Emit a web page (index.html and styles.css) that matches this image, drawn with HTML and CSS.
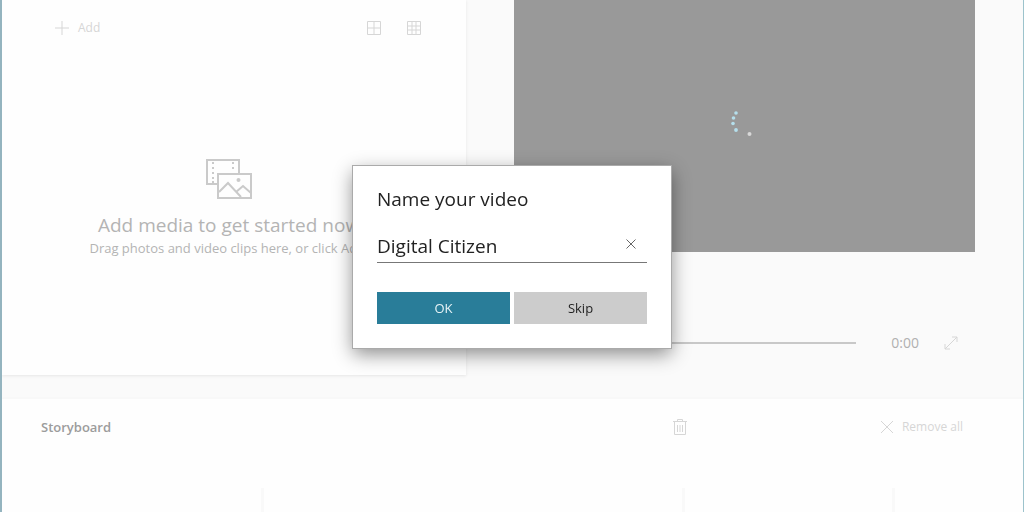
FILE: index.html
```html
<!DOCTYPE html>
<html lang="en">
<head>
<meta charset="utf-8">
<meta name="viewport" content="width=device-width, initial-scale=1">
<title>Video editor</title>
<link rel="stylesheet" href="styles.css">
</head>
<body>
<div class="window">
  <main class="workspace">
    <section class="library">
      <div class="toolbar">
        <button class="tool" type="button">
          <svg width="16" height="16" viewBox="0 0 16 16"><path d="M8 1v14M1 8h14"/></svg>
          Add
        </button>
        <div class="views">
          <button class="tool" type="button" aria-label="Large thumbnails">
            <svg width="16" height="16" viewBox="0 0 16 16"><path d="M1.500 1.500h13v13h-13zM8 1.500v13M1.500 8h13"/></svg>
          </button>
          <button class="tool" type="button" aria-label="Small thumbnails">
            <svg width="16" height="16" viewBox="0 0 16 16"><path d="M1.500 1.500h13v13h-13zM6 1.500v13M10 1.500v13M1.500 6h13M1.500 10h13"/></svg>
          </button>
        </div>
      </div>
      <div class="empty">
        <svg class="media" width="48" height="42" viewBox="0 0 48 42">
          <path d="M13 26H2V2h32v13"/>
          <path d="M8 4v2M8 9v2M8 14v2M8 19v2M8 23v3M28 4v2M28 9v2" />
          <path d="M13 16h33v24H13z"/>
          <path d="M14 34l9-9 13 14M31 34l7-6 8 7"/>
          <circle cx="33.500" cy="22" r="1"/>
        </svg>
        <h1 class="empty-title">Add media to get started now</h1>
        <p class="empty-text">Drag photos and video clips here, or click Add.</p>
      </div>
    </section>
    <section class="preview">
      <div class="screen">
        <svg width="24" height="28" viewBox="0 0 24 28" aria-label="Loading">
          <g fill="#b5dfec"><circle cx="7" cy="4" r="1.800"/><circle cx="4.500" cy="9" r="1.800"/><circle cx="4" cy="14.500" r="1.800"/><circle cx="7" cy="21" r="1.900"/></g>
          <circle cx="20.500" cy="25" r="2" fill="#d8d8d8"/>
        </svg>
      </div>
      <div class="controls">
        <span class="time">0:00</span>
        <input class="seek" type="range" min="0" max="100" value="0" aria-label="Seek">
        <span class="time">0:00</span>
        <button class="tool" type="button" aria-label="Full screen">
          <svg width="16" height="16" viewBox="0 0 16 16"><path d="M2 14L14 2M9 2h5v5M2 9v5h5"/></svg>
        </button>
      </div>
    </section>
  </main>
  <section class="storyboard">
    <header class="story-head">
      <h2 class="story-title">Storyboard</h2>
      <button class="tool trash" type="button" aria-label="Delete">
        <svg width="14" height="18" viewBox="0 0 14 18"><path d="M0 3.500h14M4.500 3V1.500h5V3M1.500 4v12.500h11V4M4.500 7v7M7 7v7M9.500 7v7"/></svg>
      </button>
      <button class="tool" type="button">
        <svg width="14" height="14" viewBox="0 0 14 14"><path d="M1 1l12 12M13 1L1 13"/></svg>
        Remove all
      </button>
    </header>
    <div class="cards"><div class="card"></div><div class="card"></div><div class="card"></div></div>
  </section>
</div>
<div class="overlay">
  <form class="dialog" role="dialog" aria-labelledby="dialog-title">
    <label class="dialog-title" id="dialog-title" for="video-name">Name your video</label>
    <div class="field">
      <input class="name" id="video-name" type="text" value="Digital Citizen">
      <button class="clear" type="button" aria-label="Clear">
        <svg width="10" height="10" viewBox="0 0 10 10"><path d="M.500.500l9 9M9.500.500l-9 9"/></svg>
      </button>
    </div>
    <div class="actions">
      <button class="action primary" type="button">OK</button>
      <button class="action" type="button">Skip</button>
    </div>
  </form>
</div>
</body>
</html>
```
FILE: styles.css
```css
* {
  box-sizing: border-box;
}

body {
  margin: 0;
  background: #fefefe;
  font-family: "Open Sans", "Noto Sans", sans-serif;
  color: #222;
}

button,
input {
  font: inherit;
  color: inherit;
  border: 0;
  padding: 0;
  margin: 0;
  background: none;
}

h1,
h2,
p {
  margin: 0;
  font-weight: 400;
}

svg {
  display: block;
  fill: none;
  stroke: currentColor;
}

.window {
  display: flex;
  flex-direction: column;
  min-height: 100vh;
  overflow: hidden;
  border-left: 2px solid #94b4bf;
  border-right: 1px solid #9cc3cc;
  background: #fafafa;
}

.workspace {
  display: grid;
  grid-template-columns: 5fr 6fr;
}

.library {
  display: flex;
  flex-direction: column;
  background: #fefefe;
  box-shadow: 0 1px 3px #e6e6e6;
  padding: 18px 44px 118px 52px;
}

.toolbar,
.views,
.tool,
.controls,
.story-head {
  display: flex;
  align-items: center;
}

.toolbar {
  justify-content: space-between;
}

.views {
  gap: 24px;
}

.tool {
  gap: 8px;
  color: #d6d6d6;
  font-size: 12px;
  line-height: 20px;
}

.empty {
  display: flex;
  flex-direction: column;
  align-items: center;
  padding-top: 120px;
  padding-right: 18px;
  color: #b4b4b4;
  white-space: nowrap;
}

.media {
  stroke-width: 2;
  color: #cacaca;
}

.empty-title {
  margin-top: 11px;
  font-size: 19px;
  line-height: 28px;
}

.empty-text {
  font-size: 13px;
  line-height: 18px;
}

.preview {
  padding: 0 48px;
}

.screen {
  display: flex;
  align-items: center;
  justify-content: center;
  height: 252px;
  padding-right: 8px;
  padding-bottom: 6px;
  background: #999;
}

.screen svg {
  stroke: none;
}

.controls {
  padding: 81px 16px 0 58px;
  color: #b0b0b0;
}

.time {
  font-size: 14px;
  line-height: 20px;
}

.seek {
  flex: 1;
  min-width: 0;
  height: 20px;
  margin: 0 35px 0 16px;
  appearance: none;
}

.seek::-webkit-slider-runnable-track {
  height: 2px;
  background: #c8c8c8;
}

.seek::-webkit-slider-thumb {
  appearance: none;
  width: 0;
}

.controls .tool {
  margin-left: 24px;
}

.storyboard {
  display: flex;
  flex: 1;
  flex-direction: column;
  margin-top: 24px;
  background: #fefefe;
  box-shadow: 0 -1px 2px #f6f6f6;
}

.story-head {
  padding: 18px 60px 0 39px;
}

.story-title {
  flex: 1;
  color: #9c9c9c;
  font-size: 13px;
  font-weight: 600;
  line-height: 20px;
}

.trash {
  margin-right: 193px;
}

.cards {
  display: grid;
  flex: 1;
  grid-template-columns: 1fr 2fr 1fr;
  margin: 51px 128px 0 52px;
}

.card {
  border-right: 3px solid #f9f9f9;
}

.overlay {
  position: fixed;
  inset: 0;
  display: grid;
  place-items: center;
  padding-top: 2px;
}

.dialog {
  width: 318px;
  max-width: 100%;
  padding: 19px 24px 24px;
  background: #fff;
  outline: 1px solid #aaa;
  box-shadow: 0 6px 18px rgb(0 0 0 / 45%);
}

.dialog-title {
  display: block;
  font-size: 19px;
  line-height: 28px;
}

.field {
  display: flex;
  align-items: center;
  margin-top: 17px;
  border-bottom: 1px solid #777;
}

.name {
  flex: 1;
  min-width: 0;
  height: 32px;
  outline: 0;
  font-size: 19px;
}

.clear {
  padding: 8px 11px 12px;
  color: #666;
}

.actions {
  display: grid;
  grid-template-columns: 1fr 1fr;
  gap: 4px;
  margin-top: 29px;
}

.action {
  height: 32px;
  background: #ccc;
  font-size: 13px;
}

.primary {
  background: #297d99;
  color: #e6f3f6;
}
```
